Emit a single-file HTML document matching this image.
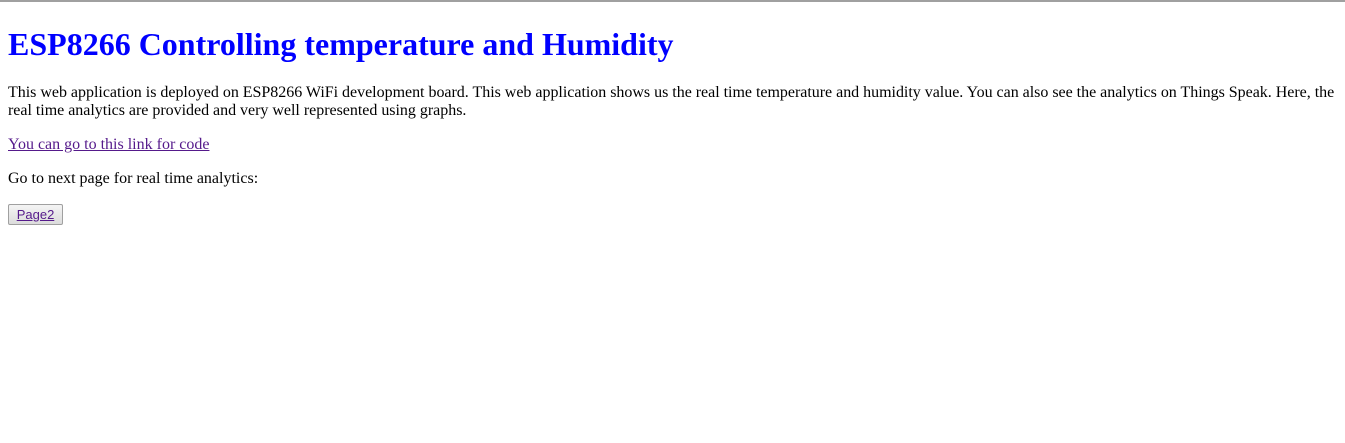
<!DOCTYPE html>
<html><head><style>
html{border-top:2px solid #a0a0a0;}
body{margin:8px;font-family:"Liberation Serif",serif;font-size:16px;color:#000;background:#fff;line-height:18px;}
h1{color:#0000ff;font-size:32px;margin:24px 0 21px;line-height:37px;}
p{margin:16px 0;}
p.first{letter-spacing:-0.02px;}
a{color:#551a8b;}
.btn{display:inline-block;width:53px;height:19px;border:1px solid #a0a0a0;background:linear-gradient(#f4f4f4,#dcdcdc);font-family:"Liberation Sans",sans-serif;font-size:13px;line-height:19px;text-align:center;color:#551a8b;text-decoration:underline;border-radius:2px;}
</style></head><body>
<h1>ESP8266 Controlling temperature and Humidity</h1>
<p class="first">This web application is deployed on ESP8266 WiFi development board. This web application shows us the real time temperature and humidity value. You can also see the analytics on Things Speak. Here, the real time analytics are provided and very well represented using graphs.</p>
<p><a href="#">You can go to this link for code</a></p>
<p>Go to next page for real time analytics:</p>
<span class="btn">Page2</span>
</body></html>
